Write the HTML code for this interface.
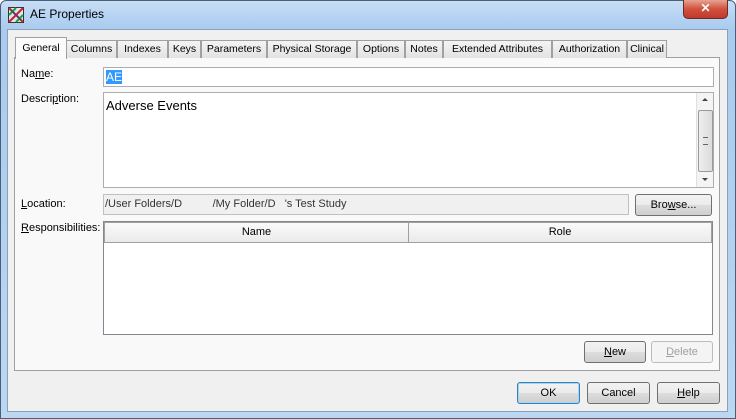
<!DOCTYPE html>
<html><head><style>
body{margin:0;width:736px;height:419px;overflow:hidden;font-family:"Liberation Sans",sans-serif;font-size:11px;color:#000;background:#fff}
.win{position:absolute;left:0;top:0;width:734px;height:417px;border:1px solid #4a5f78;border-radius:6px 6px 0 0;background:linear-gradient(180deg,#c9def5 0,#b6d3f3 15px,#a9cbee 30px,#bcd7f2 419px)}
.client{position:absolute;left:7px;top:29px;width:719px;height:381px;background:#f0f0f0;border:1px solid #8aa0b8}
.a{position:absolute}
.title{left:30px;top:7px;font-size:12px;color:#000}
.close{left:683px;top:0;width:43px;height:18px;border:1px solid #6b2b25;border-top:none;border-radius:0 0 5px 5px;background:linear-gradient(#e8a393,#d0513c 50%,#c0392b);color:#fff;font-weight:bold;text-align:center;font-size:12px;line-height:17px}
.tab{position:absolute;top:40px;height:17px;border:1px solid #a0a0a0;border-bottom:none;background:linear-gradient(#f4f4f4,#e2e2e2);text-align:center;line-height:17px;font-size:10.5px;white-space:nowrap;overflow:hidden}
.tab.sel{top:37px;height:21px;background:#fbfbfb;line-height:21px;z-index:2}
.panel{left:14px;top:57px;width:704px;height:312px;border:1px solid #a0a0a0;background:#f9f9f9}
.fld{position:absolute;border:1px solid #abadb3;background:#fff}
.btn{position:absolute;height:20px;border:1px solid #707070;border-radius:3px;background:linear-gradient(#f2f2f2 0,#ebebeb 50%,#dddddd 51%,#cfcfcf);text-align:center;line-height:20px;font-size:11px}
.lbl{position:absolute;left:21px}
</style></head><body>
<div class="win"></div>
<svg class="a" style="left:8px;top:7px" width="16" height="16"><rect x="0.5" y="0.5" width="15" height="15" fill="#d8e8f8" stroke="#333"/><path d="M1 1L15 15M15 1L1 15" stroke="#d02020" stroke-width="2"/><path d="M1 8L8 1M8 15L15 8" stroke="#20a020" stroke-width="2"/><path d="M3 3L13 13" stroke="#2040c0" stroke-width="1"/></svg>
<div class="a title">AE Properties</div>
<div class="a close">✕</div>
<div class="client"></div>
<div class="a panel"></div>
<div class="tab sel" style="left:15px;width:50px">General</div>
<div class="tab" style="left:66px;width:49px">Columns</div>
<div class="tab" style="left:117px;width:49px">Indexes</div>
<div class="tab" style="left:168px;width:31px">Keys</div>
<div class="tab" style="left:201px;width:64px">Parameters</div>
<div class="tab" style="left:267px;width:88px">Physical Storage</div>
<div class="tab" style="left:357px;width:46px">Options</div>
<div class="tab" style="left:405px;width:36px">Notes</div>
<div class="tab" style="left:443px;width:107px">Extended Attributes</div>
<div class="tab" style="left:552px;width:73px">Authorization</div>
<div class="tab" style="left:627px;width:38px">Clinical</div>
<div class="lbl" style="top:68px">Na<u>m</u>e:</div>
<div class="fld" style="left:103px;top:67px;width:609px;height:18px"><span style="position:absolute;left:2px;top:2px;background:#3399ff;color:#fff;font-size:12px;line-height:14px">AE</span></div>
<div class="lbl" style="top:93px">Descri<u>p</u>tion:</div>
<div class="fld" style="left:103px;top:92px;width:609px;height:94px"><span style="position:absolute;left:2px;top:5px;font-size:13px">Adverse Events</span>
<div class="a" style="right:0;top:0;width:16px;height:94px;background:#f4f4f4;border-left:1px solid #e0e0e0"><div class="a" style="left:5px;top:5px;border:3px solid transparent;border-bottom:3px solid #444;border-top:none"></div><div class="a" style="left:1px;top:17px;width:13px;height:60px;border:1px solid #9a9a9a;border-radius:2px;background:linear-gradient(90deg,#eee,#dcdcdc)"><div class="a" style="left:4px;top:26px;width:5px;height:6px;border-top:1px solid #666;border-bottom:1px solid #666"></div></div><div class="a" style="left:5px;top:85px;border:3px solid transparent;border-top:3px solid #444;border-bottom:none"></div></div></div>
<div class="lbl" style="top:198px"><u>L</u>ocation:</div>
<div class="fld" style="left:103px;top:194px;width:524px;height:19px;background:#f0f0f0;border-color:#c0c0c0"><span style="position:absolute;left:1px;top:3px;color:#333">/User Folders/D&nbsp;&nbsp;&nbsp;&nbsp;&nbsp;&nbsp;&nbsp;&nbsp;&nbsp;&nbsp;/My Folder/D&nbsp;&nbsp;&nbsp;'s Test Study</span></div>
<div class="btn" style="left:635px;top:194px;width:75px">Bro<u>w</u>se...</div>
<div class="lbl" style="top:222px"><u>R</u>esponsibilities:</div>
<div class="fld" style="left:103px;top:221px;width:608px;height:112px;border-color:#828790">
<div class="a" style="left:0;top:0;width:303px;height:19px;border:1px solid #a0a0a0;background:linear-gradient(#fafafa,#eaeaea);text-align:center;line-height:19px">Name</div>
<div class="a" style="left:304px;top:0;width:302px;height:19px;border:1px solid #a0a0a0;background:linear-gradient(#fafafa,#eaeaea);text-align:center;line-height:19px">Role</div></div>
<div class="btn" style="left:584px;top:341px;width:60px"><u>N</u>ew</div>
<div class="btn" style="left:651px;top:341px;width:60px;color:#a0a0a0;border-color:#bcbcbc;background:#f4f4f4"><u>D</u>elete</div>
<div class="btn" style="left:517px;top:382px;width:61px;border-color:#3c7fb1;box-shadow:inset 0 0 0 1px #9ed8f8">OK</div>
<div class="btn" style="left:587px;top:382px;width:61px">Cancel</div>
<div class="btn" style="left:657px;top:382px;width:61px"><u>H</u>elp</div>
</body></html>
